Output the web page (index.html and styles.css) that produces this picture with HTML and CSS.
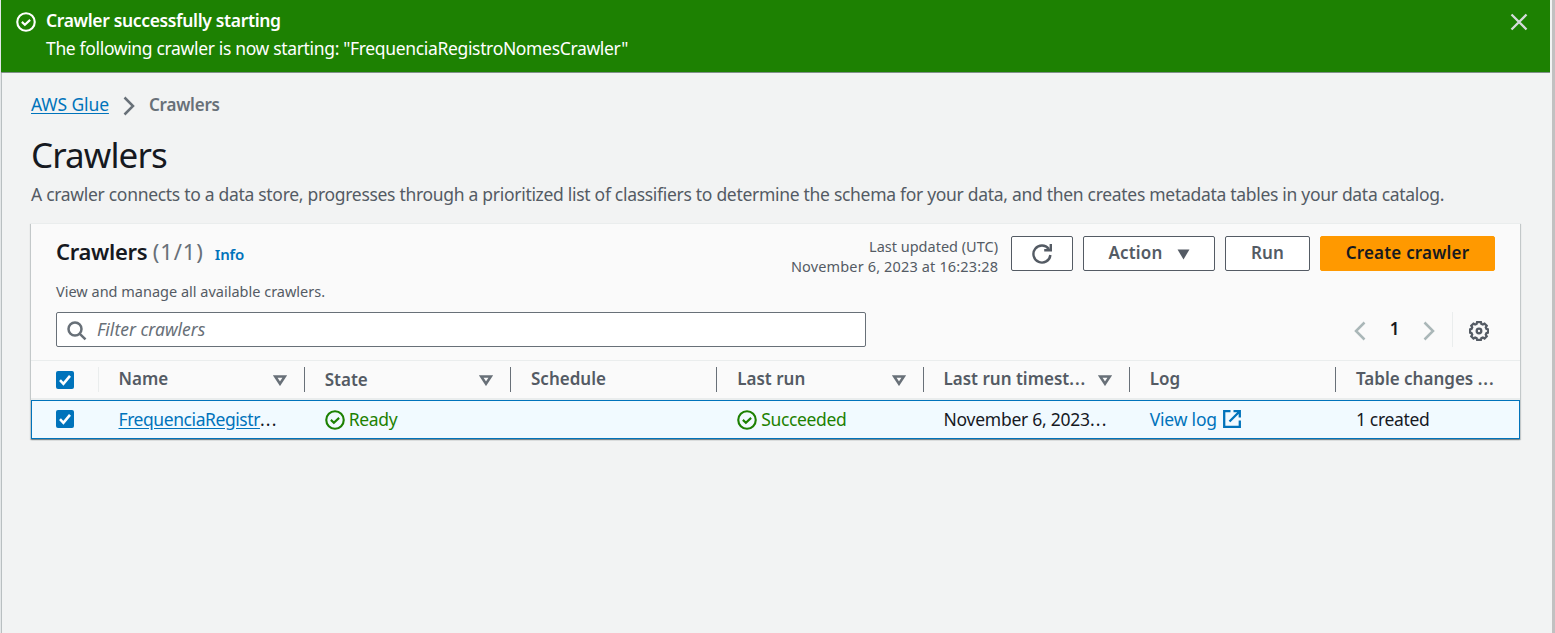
FILE: index.html
```html
<!DOCTYPE html>
<html lang="en">
<head>
<meta charset="utf-8">
<title>Crawlers - AWS Glue</title>
<link rel="stylesheet" href="styles.css">
</head>
<body>
<svg class="defs" width="0" height="0">
  <symbol id="check-circle" viewBox="0 0 16 16"><circle cx="8" cy="8" r="7"/><path d="M4.700 7.900l2.400 2.300 4.200-3.900"/></symbol>
  <symbol id="sort" viewBox="0 0 12 10"><path d="M1.600 1.300h8.800L6 8z"/></symbol>
  <symbol id="tick" viewBox="0 0 18 18"><path d="M4 9.200l3.400 3.600L14 4.800"/></symbol>
</svg>
<div class="page">
  <div class="flash">
    <svg class="icon flash-icon"><use href="#check-circle"/></svg>
    <div class="flash-text">
      <div class="flash-title">Crawler successfully starting</div>
      <div class="flash-body">The following crawler is now starting: "FrequenciaRegistroNomesCrawler"</div>
    </div>
    <svg class="close" viewBox="0 0 18 18"><path d="M1.500 1.500l15 15M16.500 1.500l-15 15"/></svg>
  </div>
  <main class="content">
    <nav class="crumbs">
      <a class="crumb-link" href="#">AWS Glue</a>
      <svg class="crumb-sep" viewBox="0 0 12 20"><path d="M1.500 1.500L10 10l-8.500 8.500"/></svg>
      <span class="crumb-current">Crawlers</span>
    </nav>
    <h1 class="title">Crawlers</h1>
    <p class="lead">A crawler connects to a data store, progresses through a prioritized list of classifiers to determine the schema for your data, and then creates metadata tables in your data catalog.</p>
    <section class="card">
      <header class="card-head">
        <div class="head-row">
          <h2 class="card-title">Crawlers <span class="count">(1/1)</span></h2>
          <a class="info" href="#">Info</a>
          <div class="updated"><div class="up1">Last updated (UTC)</div><div class="up2">November 6, 2023 at 16:23:28</div></div>
          <div class="actions">
            <button class="btn refresh"><svg viewBox="0 0 20 20"><path d="M18.400 11A8.500 8.500 0 1 1 16.800 5M18.800 0v6.200h-6.600"/></svg></button>
            <button class="btn action"><span>Action</span><svg viewBox="0 0 14 12"><path d="M0.500 0.500h13L7 11.500z"/></svg></button>
            <button class="btn run"><span>Run</span></button>
            <button class="btn primary"><span>Create crawler</span></button>
          </div>
        </div>
        <p class="card-desc">View and manage all available crawlers.</p>
        <div class="tools">
          <label class="search">
            <svg viewBox="0 0 20 20"><circle cx="8" cy="8" r="6.500"/><path d="M12.800 12.800l5.700 5.500"/></svg>
            <span>Filter crawlers</span>
          </label>
          <div class="pager">
            <svg class="arrow" viewBox="0 0 12 20"><path d="M10.500 1.500L2 10l8.500 8.500"/></svg>
            <span class="page-no">1</span>
            <svg class="arrow" viewBox="0 0 12 20"><path d="M1.500 1.500L10 10l-8.500 8.500"/></svg>
            <span class="gear-wrap"><svg class="gear" viewBox="0 0 20 20"><path d="M8.100 1.200h3.800l.5 1.700 1.500.6 1.600-.9 2.200 2.200-.9 1.600.6 1.500 1.600.5v3.300l-1.600.5-.6 1.500.9 1.600-2.200 2.200-1.600-.9-1.500.6-.5 1.600H8.100l-.5-1.600-1.500-.6-1.600.9-2.200-2.200.9-1.600-.6-1.500-1.500-.5V8.400l1.500-.5.6-1.500-.9-1.600 2.200-2.200 1.600.9 1.500-.6z"/><circle cx="10" cy="10" r="2.300"/></svg></span>
          </div>
        </div>
      </header>
      <div class="row row-head">
        <div class="cell pick"><span class="box"><svg><use href="#tick"/></svg></span></div>
        <div class="cell"><span>Name</span><svg class="sort"><use href="#sort"/></svg></div>
        <div class="cell state"><span>State</span><svg class="sort"><use href="#sort"/></svg></div>
        <div class="cell"><span>Schedule</span></div>
        <div class="cell"><span>Last run</span><svg class="sort"><use href="#sort"/></svg></div>
        <div class="cell"><span>Last run timest<i class="dots">...</i></span><svg class="sort"><use href="#sort"/></svg></div>
        <div class="cell"><span>Log</span></div>
        <div class="cell"><span>Table changes <i class="dots">...</i></span></div>
      </div>
      <div class="row row-data">
        <div class="cell pick"><span class="box"><svg><use href="#tick"/></svg></span></div>
        <div class="cell name"><a href="#">FrequenciaRegistr</a><i class="dots">...</i></div>
        <div class="cell ok"><svg class="icon"><use href="#check-circle"/></svg><span>Ready</span></div>
        <div class="cell"></div>
        <div class="cell ok"><svg class="icon"><use href="#check-circle"/></svg><span>Succeeded</span></div>
        <div class="cell stamp"><span>November 6, 2023<i class="dots">...</i></span></div>
        <div class="cell log"><span>View log</span><svg viewBox="0 0 18 18"><path d="M7.500 1.200H1.200v15.600h15.600v-6.300M10.500 1.200h6.300v6.300M16.500 1.500L6.500 11.500"/></svg></div>
        <div class="cell"><span>1 created</span></div>
      </div>
    </section>
  </main>
</div>
</body>
</html>
```

FILE: styles.css
```css
* { box-sizing: border-box; }
body {
  margin: 0;
  height: 633px;
  overflow: hidden;
  background: #f2f3f3;
  color: #16191f;
  font: 17.5px/24px "Noto Sans", "Open Sans", sans-serif;
}
h1, h2, p { margin: 0; font-weight: 400; }
svg { flex: none; fill: none; stroke: currentColor; }
.defs { display: block; position: absolute; }
.page { height: 633px; border-left: 1px solid #e4e7e8; border-right: 3px solid #c1c1c1; }
.flash {
  display: flex;
  width: 1549px;
  height: 73px;
  padding: 8px 22px 0 15px;
  background: #1d8102;
  color: #fff;
  border-bottom: 1px solid #81908a;
}
.icon { width: 20px; height: 20px; stroke-width: 1.7; }
.flash-icon { margin-top: 4px; }
.flash-text { flex: 1; margin-left: 10px; }
.flash-title { font-weight: 600; letter-spacing: -0.35px; height: 28px; }
.flash-body { letter-spacing: -0.34px; }
.close { width: 18px; height: 18px; margin-top: 5px; color: #d5dbdb; stroke-width: 2.3; }
.content { height: 560px; padding: 20px 31px 0 29px; border-left: 1px solid #b9bfc1; }
.crumbs { display: flex; align-items: center; height: 24px; }
.crumb-link { margin-top: -2px; color: #0073bb; text-underline-offset: 2px; letter-spacing: -0.12px; }
.crumb-sep { width: 12px; height: 20px; margin: 2px 14px 0; color: #687078; stroke-width: 2.5; }
.crumb-current { color: #687078; font-weight: 600; font-size: 17px; letter-spacing: -0.2px; }
.title { margin-top: 16px; font-size: 35px; line-height: 44px; letter-spacing: -0.9px; }
.lead { margin-top: 5px; color: #545b64; white-space: nowrap; letter-spacing: -0.3px; }
.card {
  width: 1489px;
  margin-top: 17px;
  background: #fafafa;
  border-top: 1px solid #eaeded;
  box-shadow: 0 1px 1px rgba(0,28,36,.3), 1px 1px 1px rgba(0,28,36,.15), -1px 1px 1px rgba(0,28,36,.15);
}
.card-head { height: 136px; padding: 12px 25px 0; }
.head-row { display: flex; height: 40px; }
.card-title { margin-top: -1px; font-size: 22px; line-height: 32px; font-weight: 600; letter-spacing: -0.3px; }
.count { font-weight: 400; color: #687078; letter-spacing: 0.9px; }
.info { margin: 6px 0 0 11px; font-size: 15px; font-weight: 600; color: #0073bb; text-decoration: none; letter-spacing: -0.2px; }
.updated { margin-left: auto; text-align: right; font-size: 14.5px; line-height: 20px; color: #545b64; }
.up2 { letter-spacing: 0.15px; margin-right: -0.15px; }
.actions { display: flex; gap: 10px; margin-left: 13px; }
.btn {
  display: flex;
  align-items: center;
  justify-content: center;
  height: 35px;
  padding: 0 0 2px;
  border: 1px solid #545b64;
  border-radius: 2px;
  background: #fff;
  color: #545b64;
  font: 600 17px/24px "Noto Sans", sans-serif;
  letter-spacing: 0.2px;
}
.refresh { width: 62px; padding-bottom: 0; }
.refresh svg { width: 20px; height: 20px; stroke-width: 2.4; }
.action { width: 132px; gap: 14px; }
.action svg { width: 13px; height: 11px; margin-top: 3px; fill: currentColor; stroke: none; }
.run { width: 85px; }
.primary { width: 175px; background: #f90; border-color: #f90; color: #16191f; }
.card-desc { height: 24px; margin-top: 3px; font-size: 14.5px; color: #545b64; }
.tools { display: flex; justify-content: space-between; margin-top: 9px; }
.search {
  display: flex;
  align-items: center;
  width: 810px;
  height: 35px;
  padding-left: 10px;
  gap: 10px;
  border: 1px solid #687078;
  border-radius: 2px;
  background: #fff;
  color: #687078;
  font-style: italic;
}
.search span { margin-top: -2px; }
.search svg { width: 20px; height: 20px; stroke-width: 2.5; margin-top: 2px; }
.pager { display: flex; align-items: center; height: 35px; }
.arrow { width: 12px; height: 20px; color: #aab7b8; stroke-width: 2.5; margin-top: 3px; }
.page-no { width: 57px; margin-top: -1px; text-align: center; font-weight: 600; font-size: 17px; }
.gear-wrap { display: flex; align-items: center; height: 35px; margin-left: 17px; padding: 2px 6px 0 16px; border-left: 1px solid #eaeded; }
.gear { width: 20px; height: 20px; color: #545b64; stroke-width: 2.3; }
.row { display: grid; grid-template-columns: 67.5px repeat(6, 206.25px) 1fr; }
.cell { display: flex; align-items: center; padding-left: 20px; white-space: nowrap; overflow: hidden; }
.pick { padding-left: 24.5px; }
.box { display: flex; width: 18px; height: 18px; border-radius: 2px; background: #0073bb; color: #fff; }
.box svg { width: 18px; height: 18px; stroke-width: 2.6; }
.dots { font-style: normal; letter-spacing: 1.2px; }
.row-head { height: 40px; border-top: 1px solid #eaeded; border-bottom: 2px solid #eaeded; color: #545b64; font-weight: 600; font-size: 17px; }
.row-head .cell { height: 25px; margin-top: 6px; border-right: 1px solid #687078; }
.row-head .cell > span:not(.box) { margin-top: -1px; }
.row-head .state > span:not(.box) { margin-top: 0; }
.row-head .dots { letter-spacing: 1px; }
.row-head .pick { border-color: #eaeded; }
.row-head .cell:last-child { border: 0; }
.sort { width: 14px; height: 11px; margin: 2px 17px 0 auto; stroke-width: 2.3; color: #687078; }
.row-data {
  height: 39px;
  border: 1px solid #0073bb;
  background: #f1faff;
  grid-template-columns: 66.5px repeat(6, 206.25px) 1fr;
  letter-spacing: -0.35px;
}
.row-data .cell { padding-bottom: 2px; }
.row-data .pick { padding-left: 23.5px; padding-bottom: 1px; }
.name a { color: #0073bb; text-underline-offset: 2px; letter-spacing: -0.43px; }
.ok { color: #1d8102; gap: 4px; }
.ok .icon { margin-top: 2px; }
.stamp { letter-spacing: -0.25px; }
.log { color: #0073bb; gap: 6px; letter-spacing: -0.2px; }
.log svg { width: 18px; height: 18px; margin-top: 1px; stroke-width: 2.3; }
```
